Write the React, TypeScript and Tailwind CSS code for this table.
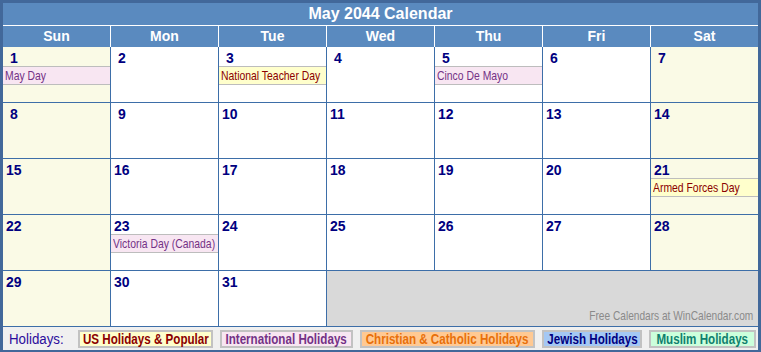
const DAYS = ["Sun", "Mon", "Tue", "Wed", "Thu", "Fri", "Sat"];

type Holiday = { name: string; kind: "us" | "intl" };

const HOLIDAYS: Record<number, Holiday> = {
  1: { name: "May Day", kind: "intl" },
  3: { name: "National Teacher Day", kind: "us" },
  5: { name: "Cinco De Mayo", kind: "intl" },
  21: { name: "Armed Forces Day", kind: "us" },
  23: { name: "Victoria Day (Canada)", kind: "intl" },
};

const KIND_STYLE = {
  us: "bg-[#ffffcc] text-[#8b0000]",
  intl: "bg-[#f8e6f2] text-[#743286]",
};

const LEGEND = [
  { label: "US Holidays & Popular", cls: "bg-[#ffffcc] text-[#8b0000] w-[135px]" },
  { label: "International Holidays", cls: "bg-[#f8e6f2] text-[#743286] w-[133px]" },
  { label: "Christian & Catholic Holidays", cls: "bg-[#ffc993] text-[#e8700a] w-[175px]" },
  { label: "Jewish Holidays", cls: "bg-[#a4c8f4] text-[#000080] w-[100px]" },
  { label: "Muslim Holidays", cls: "bg-[#ccffdc] text-[#10806e] w-[107px]" },
];

// no Arial Narrow in the sandbox, so squeeze Liberation Sans instead
const narrow = "inline-block whitespace-nowrap align-top";

function DayCell({ day, col }: { day: number; col: number }) {
  const weekend = col === 0 || col === 6;
  const h = HOLIDAYS[day];
  return (
    <div className={`flex h-[55px] flex-col ${weekend ? "bg-[#fafae6]" : "bg-white"}`}>
      <div className="h-[19px] pl-[3px] pt-[3px] text-[14px] font-bold leading-[16px] text-[#000080]">
        <span className={day < 10 ? "ml-[4px]" : ""}>{day}</span>
      </div>
      {h && (
        <div className={`h-[19px] border-y border-[#bdbdbd] pl-[2px] leading-[17px] ${KIND_STYLE[h.kind]}`}>
          <span className={`${narrow} origin-left scale-x-[0.8] text-[13px] leading-[17px]`}>{h.name}</span>
        </div>
      )}
    </div>
  );
}

export default function App() {
  const cells: number[] = [];
  for (let d = 1; d <= 31; d++) cells.push(d);

  return (
    <div className="h-[352px] w-[761px] border-[3px] border-[#42689a] bg-[#5a8abf] font-['Liberation_Sans',Arial,sans-serif]">
      <div className="h-[22px] text-center text-[16px] font-bold leading-[22px] text-white">
        May 2044 Calendar
      </div>
      <div className="grid grid-cols-7 gap-px border-t border-white bg-white">
        {DAYS.map((d) => (
          <div key={d} className="h-[21px] bg-[#5a8abf] text-center text-[14px] font-bold leading-[20px] text-white">
            {d}
          </div>
        ))}
      </div>
      <div className="grid grid-cols-7 gap-px bg-[#3d6ea8] pb-px">
        {cells.map((d, i) => (
          <DayCell key={i} day={d} col={i % 7} />
        ))}
        <div className="col-span-4 flex h-[55px] items-end justify-end bg-[#d9d9d9] pb-[3px] pr-[5px]">
          <span className={`${narrow} origin-right scale-x-[0.78] text-[13px] leading-[15px] text-[#8a8a8a]`}>
            Free Calendars at WinCalendar.com
          </span>
        </div>
      </div>
      <div className="flex h-[23px] items-start gap-[7px] bg-[#f0f0f0] pl-[6px] pt-[3px]">
        <span className="mr-[6px] w-[56px] leading-[18px]">
          <span className={`${narrow} origin-left scale-x-[0.95] text-[14px] leading-[18px] text-[#2b0c9c]`}>
            Holidays:
          </span>
        </span>
        {LEGEND.map((l) => (
          <span
            key={l.label}
            className={`flex h-[18px] justify-center border-2 border-[#c2c2c2] ${l.cls}`}
          >
            <span className={`${narrow} shrink-0 scale-x-[0.83] text-[14px] font-bold leading-[14px]`}>
              {l.label}
            </span>
          </span>
        ))}
      </div>
    </div>
  );
}
